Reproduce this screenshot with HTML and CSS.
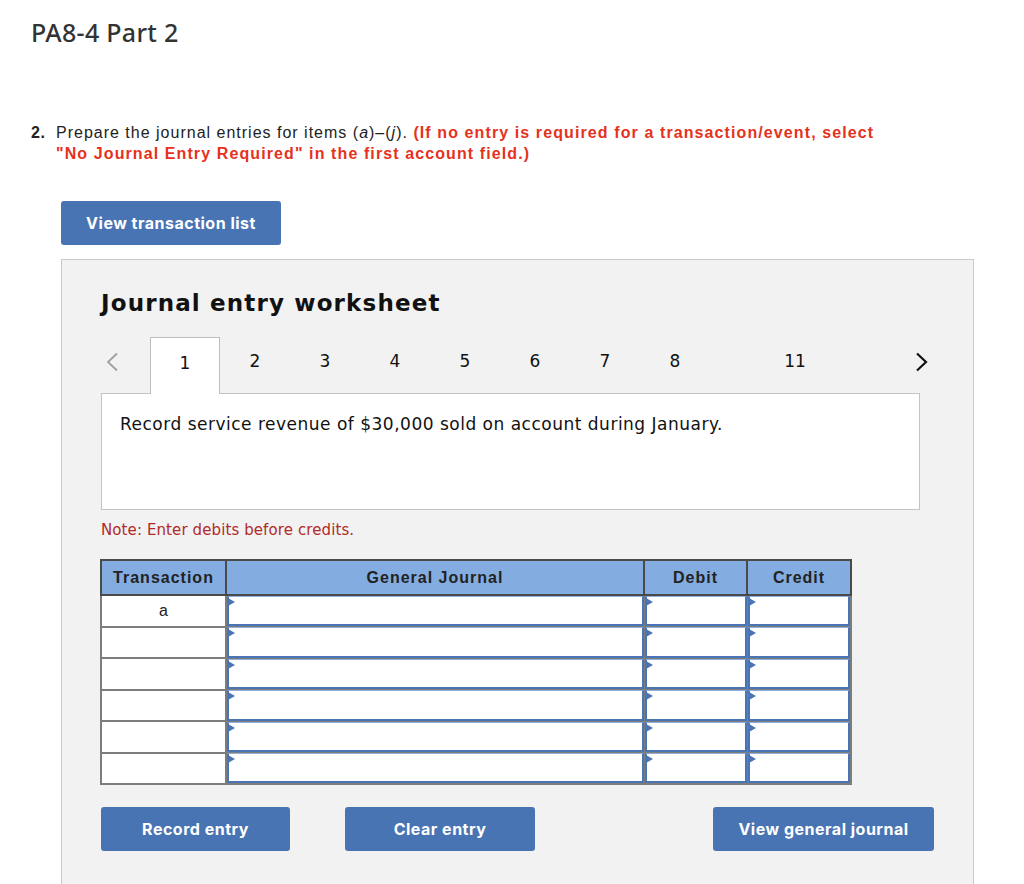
FILE: index.html
```html
<!DOCTYPE html>
<html>
<head>
<meta charset="utf-8">
<link rel="stylesheet" href="styles.css">
</head>
<body>
<div class="page">
  <h1 class="title">PA8-4 Part 2</h1>
  <div class="instr">
    <span class="num">2.</span>
    <div class="instr-text">Prepare the journal entries for items (<i>a</i>)–(<i>j</i>). <b class="red">(If no entry is required for a transaction/event, select<br>"No Journal Entry Required" in the first account field.)</b></div>
  </div>
  <button class="btn btn-list">View transaction list</button>

  <div class="panel">
    <h2 class="ws-title">Journal entry worksheet</h2>
    <div class="tabs">
      <div class="nav prev"><svg width="14" height="20" viewBox="0 0 14 20"><polyline points="12,1.5 3,10 12,18.5" fill="none" stroke="#a0a0a0" stroke-width="1.8"/></svg></div>
      <div class="tab active">1</div>
      <div class="tab">2</div>
      <div class="tab">3</div>
      <div class="tab">4</div>
      <div class="tab">5</div>
      <div class="tab">6</div>
      <div class="tab">7</div>
      <div class="tab">8</div>
      <div class="tab tab-far">11</div>
      <div class="nav next"><svg width="14" height="20" viewBox="0 0 14 20"><polyline points="2,1.5 11,10 2,18.5" fill="none" stroke="#111" stroke-width="2.2"/></svg></div>
    </div>
    <div class="content">Record service revenue of $30,000 sold on account during January.</div>
    <div class="note">Note: Enter debits before credits.</div>

    <table class="journal">
      <thead>
        <tr>
          <th class="c-tr">Transaction</th>
          <th class="c-gj">General Journal</th>
          <th class="c-dr">Debit</th>
          <th class="c-cr">Credit</th>
        </tr>
      </thead>
      <tbody>
        <tr><td class="tr">a</td><td class="in"><div class="box"></div><span class="mark"></span></td><td class="in"><div class="box"></div><span class="mark"></span></td><td class="in"><div class="box"></div><span class="mark"></span></td></tr>
        <tr><td class="tr"></td><td class="in"><div class="box"></div><span class="mark"></span></td><td class="in"><div class="box"></div><span class="mark"></span></td><td class="in"><div class="box"></div><span class="mark"></span></td></tr>
        <tr><td class="tr"></td><td class="in"><div class="box"></div><span class="mark"></span></td><td class="in"><div class="box"></div><span class="mark"></span></td><td class="in"><div class="box"></div><span class="mark"></span></td></tr>
        <tr><td class="tr"></td><td class="in"><div class="box"></div><span class="mark"></span></td><td class="in"><div class="box"></div><span class="mark"></span></td><td class="in"><div class="box"></div><span class="mark"></span></td></tr>
        <tr><td class="tr"></td><td class="in"><div class="box"></div><span class="mark"></span></td><td class="in"><div class="box"></div><span class="mark"></span></td><td class="in"><div class="box"></div><span class="mark"></span></td></tr>
        <tr><td class="tr"></td><td class="in"><div class="box"></div><span class="mark"></span></td><td class="in"><div class="box"></div><span class="mark"></span></td><td class="in"><div class="box"></div><span class="mark"></span></td></tr>
      </tbody>
    </table>

    <div class="actions">
      <button class="btn btn-record">Record entry</button>
      <button class="btn btn-clear">Clear entry</button>
      <button class="btn btn-view">View general journal</button>
    </div>
  </div>
</div>
</body>
</html>
```

FILE: styles.css
```css
* { box-sizing: border-box; }
html, body { margin: 0; padding: 0; background: #fff; }
body { font-family: "Liberation Sans", Arial, sans-serif; color: #222; }

.page { padding: 17px 0 0 31px; }

.title {
  margin: 0;
  font-family: "Noto Sans", sans-serif;
  font-weight: 500;
  font-size: 25px;
  line-height: 30px;
  letter-spacing: 0.3px;
  color: #333;
}

.instr {
  display: flex;
  margin-top: 75px;
  font-size: 16px;
  line-height: 21px;
  letter-spacing: 1px;
  color: #222;
}
.num { width: 25px; font-weight: bold; flex: none; letter-spacing: 0.5px; }
.red { color: #e5321d; letter-spacing: 1.1px; }

.btn {
  display: flex;
  align-items: center;
  justify-content: center;
  height: 44px;
  border: none;
  border-radius: 3px;
  background: #4874b3;
  color: #fff;
  font-family: Inter, "Liberation Sans", sans-serif;
  font-weight: 700;
  font-size: 16px;
  letter-spacing: 0.5px;
  padding: 0;
  cursor: pointer;
}
.btn-list { width: 220px; margin: 37px 0 0 30px; }

.panel {
  width: 913px;
  height: 640px;
  margin: 14px 0 0 30px;
  background: #f2f2f2;
  border: 1px solid #cbcbcb;
  padding: 28px 39px 0 39px;
}

.ws-title {
  margin: 0;
  font-family: "DejaVu Sans", Verdana, sans-serif;
  font-weight: bold;
  font-size: 23px;
  line-height: 30px;
  letter-spacing: 1.15px;
  color: #111;
}

.tabs {
  display: flex;
  align-items: stretch;
  height: 56px;
  margin-top: 19px;
  font-family: "DejaVu Sans", Verdana, sans-serif;
  font-size: 17px;
  color: #111;
}
.nav { display: flex; align-items: center; padding-bottom: 6px; }
.prev { width: 49px; padding-left: 4px; }
.next { margin-left: auto; padding-right: 5px; }
.tab {
  width: 70px;
  display: flex;
  align-items: center;
  justify-content: center;
  padding-bottom: 8px;
}
.tab.active {
  background: #fff;
  border: 1px solid #bdbdbd;
  border-bottom: none;
  position: relative;
  z-index: 1;
  margin-bottom: -1px;
  height: 57px;
  padding-bottom: 7px;
}
.tab-far { margin-left: 50px; }

.content {
  width: 819px;
  height: 117px;
  background: #fff;
  border: 1px solid #c4c4c4;
  padding: 20px 18px;
  font-family: "DejaVu Sans", Verdana, sans-serif;
  font-size: 17px;
  line-height: 20px;
  letter-spacing: 0.5px;
  color: #111;
}

.note {
  margin-top: 10px;
  font-family: "DejaVu Sans", Verdana, sans-serif;
  font-size: 15px;
  line-height: 20px;
  letter-spacing: 0.1px;
  color: #b02a2a;
}

.journal {
  margin: 19px 0 0 -1px;
  border-collapse: collapse;
  table-layout: fixed;
  width: 750px;
  border: 2px solid #7d7d7d;
}
.journal th {
  height: 35px;
  background: #83ace0;
  border: 2px solid #4a4a4a;
  font-family: "Liberation Sans", Arial, sans-serif;
  font-weight: bold;
  font-size: 16px;
  letter-spacing: 1px;
  color: #222;
  padding: 0;
}
.c-tr { width: 125px; }
.c-gj { width: 418px; }
.c-dr { width: 103px; }
.c-cr { width: 104px; }

.journal td {
  height: 31.5px;
  padding: 0;
  background: #fff;
}
.journal td.tr {
  border: 2px solid #7d7d7d;
  text-align: center;
  font-size: 16px;
  color: #222;
}
.journal td.in {
  position: relative;
  border: 1px solid #7d7d7d;
  border-left-width: 0;
  background: #c9d6e8;
}
.box {
  position: absolute;
  left: 0; top: 0; right: 0; bottom: 0;
  background: #fff;
  border: 1px solid #8fb0dd;
  border-left: 2px solid #4a75b4;
  border-bottom: 2px solid #4a75b4;
  border-right: 2px solid #4a75b4;
}
.mark {
  position: absolute;
  left: 1px;
  top: 2px;
  width: 0; height: 0;
  border-left: 7px solid #4a75b4;
  border-top: 4px solid transparent;
  border-bottom: 4px solid transparent;
}

.actions {
  display: flex;
  margin-top: 22px;
}
.btn-record { width: 189px; }
.btn-clear { width: 190px; margin-left: 55px; }
.btn-view { width: 221px; margin-left: auto; }
```
